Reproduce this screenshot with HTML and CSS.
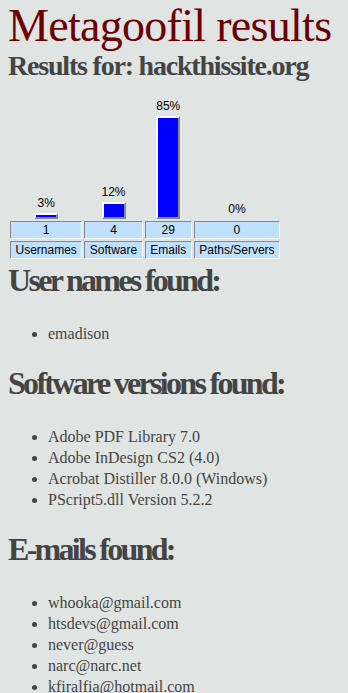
FILE: index.html
```html
<!DOCTYPE html>
<html lang="en">

<head>
    <meta charset="UTF-8">
    <meta name="viewport" content="width=device-width, initial-scale=1.0">
    <title>Metagoofil results</title>
    <link rel="stylesheet" href="styles.css">
</head>

<body>
    <h1 class="title">Metagoofil results</h1>
    <h2 class="target">Results for: hackthissite.org</h2>

    <table class="chart">
        <tr class="bars">
            <td><span class="pct">3%</span><div class="bar" style="height: 2px"></div></td>
            <td><span class="pct">12%</span><div class="bar" style="height: 13px"></div></td>
            <td><span class="pct">85%</span><div class="bar" style="height: 99px"></div></td>
            <td><span class="pct">0%</span></td>
        </tr>
        <tr class="cells">
            <td>1</td>
            <td>4</td>
            <td>29</td>
            <td>0</td>
        </tr>
        <tr class="cells">
            <td>Usernames</td>
            <td>Software</td>
            <td>Emails</td>
            <td>Paths/Servers</td>
        </tr>
    </table>

    <h2 class="section">User names found:</h2>
    <ul class="found">
        <li>emadison</li>
    </ul>

    <h2 class="section">Software versions found:</h2>
    <ul class="found">
        <li>Adobe PDF Library 7.0</li>
        <li>Adobe InDesign CS2 (4.0)</li>
        <li>Acrobat Distiller 8.0.0 (Windows)</li>
        <li>PScript5.dll Version 5.2.2</li>
    </ul>

    <h2 class="section">E-mails found:</h2>
    <ul class="found">
        <li>whooka@gmail.com</li>
        <li>htsdevs@gmail.com</li>
        <li>never@guess</li>
        <li>narc@narc.net</li>
        <li>kfiralfia@hotmail.com</li>
    </ul>
</body>

</html>
```

FILE: styles.css
```css
* {
    padding: 0px;
    margin: 0px;
}

body {
    margin: 8px;
    background-color: #e0e4e3;
    color: #444;
    font-family: "Liberation Serif", serif;
}

.title {
    margin-top: -8px;
    color: #6b0000;
    font-size: 46px;
    font-weight: normal;
    line-height: 51px;
    letter-spacing: -0.7px;
    white-space: nowrap;
}

.target {
    font-size: 28px;
    line-height: 30px;
    letter-spacing: -1.2px;
    white-space: nowrap;
}

.chart {
    margin-top: 16px;
    border-spacing: 2px;
    font-family: "Liberation Sans", sans-serif;
    font-size: 12px;
    color: #000;
}

.chart .bars td {
    vertical-align: bottom;
    text-align: center;
    padding: 0px;
}

.chart .pct {
    display: block;
    margin-bottom: 3px;
    line-height: 14px;
}

.chart .bar {
    width: 20px;
    margin: 0px auto;
    background-color: #00f;
    border: 2px solid;
    border-color: #fff #888 #888 #fff;
}

.chart .cells td {
    height: 16px;
    padding: 0px 4.5px;
    text-align: center;
    line-height: 16px;
    background-color: #bfe0ff;
    border: 1px solid;
    border-color: #888 #fff #fff #888;
}

.section {
    margin-top: 21px;
    font-size: 32px;
    line-height: 36px;
    letter-spacing: -2.7px;
    white-space: nowrap;
}

.chart + .section {
    margin-top: 1px;
}

.found {
    margin-top: 25px;
    padding-left: 40px;
    font-size: 16px;
    line-height: 21px;
}
```
